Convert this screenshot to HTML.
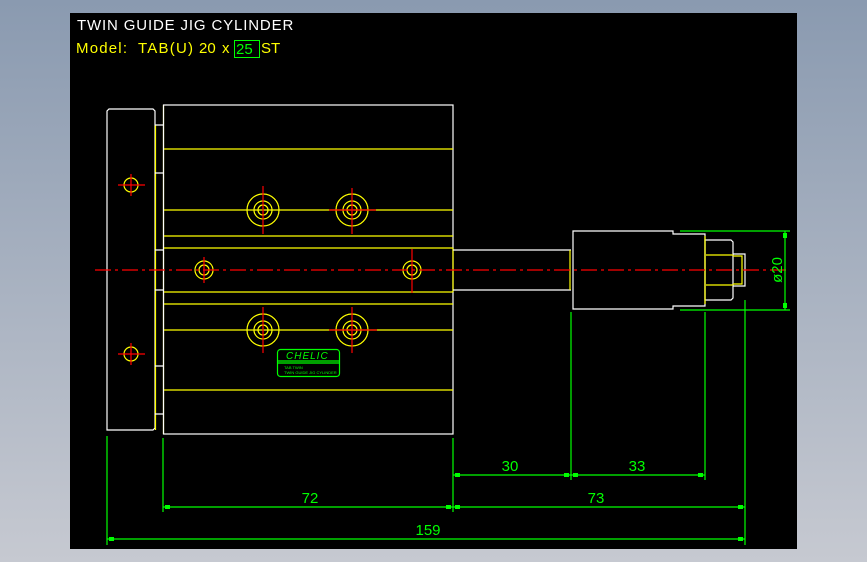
<!DOCTYPE html>
<html><head><meta charset="utf-8"><style>
html,body{margin:0;padding:0}
body{width:867px;height:562px;background:linear-gradient(#8a9ab0,#c6c9d1);position:relative;overflow:hidden}
svg{position:absolute;left:0;top:0}
text{font-family:"Liberation Sans",sans-serif}
</style></head><body>
<svg width="867" height="562" viewBox="0 0 867 562">
<rect x="70" y="13" width="727" height="536" fill="#000"/>
<text x="77" y="30" fill="#fff" font-size="15" letter-spacing="0.7" textLength="217">TWIN  GUIDE  JIG  CYLINDER</text>
<g fill="#ff0" font-size="15">
<text x="76" y="53" textLength="51">Model:</text>
<text x="138" y="53" textLength="55">TAB(U)</text>
<text x="199" y="53">20</text>
<text x="222" y="53">x</text>
<text x="261" y="53">ST</text>
</g>
<rect x="234.5" y="40.5" width="25" height="17" fill="none" stroke="#0f0"/>
<text x="236" y="54" fill="#0f0" font-size="15">25</text>
<g fill="none" stroke-width="1.2">
<path d="M107 430V111l2-2h44l2 2v317l-2 2z" stroke="#fff"/>
<path d="M155.5 125V430M163.5 105V434" stroke="#ff0"/>
<path d="M155 125h8M155 173h8M155 250h8M155 290h8M155 366h8M155 414h8" stroke="#fff"/>
<rect x="163.5" y="105" width="289.5" height="329" stroke="#fff"/>
<path d="M164 149h289M164 210h289M164 236h289M164 248h289M164 292h289M164 304h289M164 330h289M164 390h289" stroke="#ff0"/>
<path d="M453 248V292" stroke="#ff0"/>
<path d="M453 250H571M453 290H571" stroke="#fff"/>
<path d="M570 250V290" stroke="#ff0"/>
<path d="M573 231h100v3h32v72h-32v3h-100z" stroke="#fff"/>
<path d="M705 240h26l2 2v56l-2 2h-26z" stroke="#fff"/>
<path d="M706 255h27M706 285h27M705 236V304" stroke="#ff0"/>
<path d="M733 254h12v32h-12" stroke="#fff"/>
<path d="M733 256h9v28h-9" stroke="#ff0"/>
<g stroke="#ff0">
<circle cx="263" cy="210" r="16"/><circle cx="263" cy="210" r="9"/><circle cx="263" cy="210" r="5"/>
<circle cx="352" cy="210" r="16"/><circle cx="352" cy="210" r="9"/><circle cx="352" cy="210" r="5"/>
<circle cx="263" cy="330" r="16"/><circle cx="263" cy="330" r="9"/><circle cx="263" cy="330" r="5"/>
<circle cx="352" cy="330" r="16"/><circle cx="352" cy="330" r="9"/><circle cx="352" cy="330" r="5"/>
<circle cx="204" cy="270" r="9"/><circle cx="204" cy="270" r="5"/>
<circle cx="412" cy="270" r="9"/><circle cx="412" cy="270" r="5"/>
<circle cx="131" cy="185" r="7"/><circle cx="131" cy="354" r="7"/>
</g>
<g stroke="#f00">
<path d="M95 270H790" stroke-dasharray="16 4 3 4"/>
<path d="M263 186v48M352 188v46M263 307v46M352 307v46M204 257v26M412 249v44M131 174v22M131 343v22M118 185h27M118 354h27M329 210h47M329 330h48"/>
</g>
<rect x="277.5" y="349.5" width="62" height="27" rx="3" stroke="#0f0"/>
<path d="M278 361h61M278 363h61" stroke="#0f0"/>
</g>
<text x="286" y="359" fill="#0f0" font-size="10" font-style="italic" letter-spacing="1">CHELIC</text>
<text x="284" y="369" fill="#0f0" font-size="4">TAB  TWIN</text>
<text x="284" y="374" fill="#0f0" font-size="4">TWIN GUIDE JIG CYLINDER</text>
<g stroke="#0f0" stroke-width="1.2" fill="none">
<path d="M107 436V545M163 438V512M453 438V512M571 312V480M705 312V480M745 300V545"/>
<path d="M453 475H705M163 507H745M107 539H745"/>
<path d="M680 231H790M680 310H790M785 231V310"/>
</g>
<g fill="#0f0">
<rect x="455" y="473" width="5" height="4"/><rect x="564" y="473" width="5" height="4"/><rect x="573" y="473" width="5" height="4"/><rect x="698" y="473" width="5" height="4"/>
<rect x="165" y="505" width="5" height="4"/><rect x="446" y="505" width="5" height="4"/><rect x="455" y="505" width="5" height="4"/><rect x="738" y="505" width="5" height="4"/>
<rect x="109" y="537" width="5" height="4"/><rect x="738" y="537" width="5" height="4"/>
<rect x="783" y="233" width="4" height="5"/><rect x="783" y="303" width="4" height="5"/>
</g>
<g fill="#0f0" font-size="15" text-anchor="middle">
<text x="510" y="471">30</text><text x="637" y="471">33</text>
<text x="310" y="503">72</text><text x="596" y="503">73</text>
<text x="428" y="535">159</text>
<text transform="translate(782 270) rotate(-90)">ø20</text>
</g>
</svg>
</body></html>
